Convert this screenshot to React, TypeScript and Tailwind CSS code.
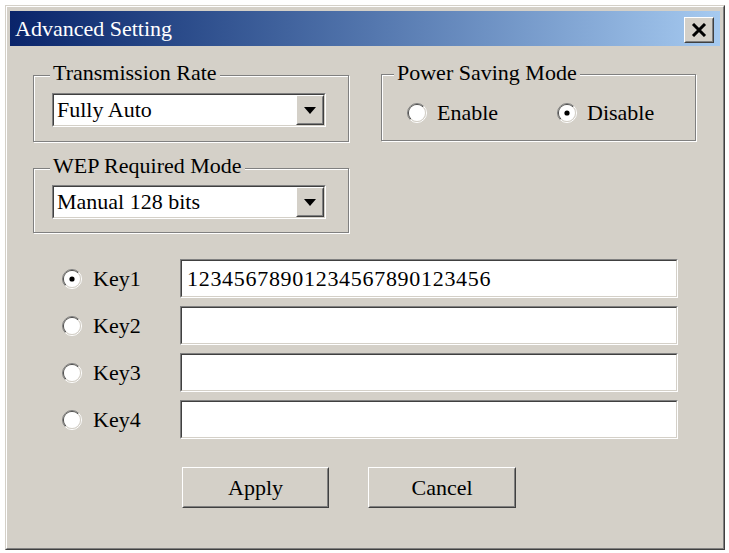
import type { ReactNode } from 'react'

// ============================================
// Classic Win2000 style "Advanced Setting" dialog
// ============================================

const FACE = 'bg-[#d4d0c8]'

function Sunken({ children, className = '' }: { children?: ReactNode; className?: string }) {
  return (
    <div className={`border border-t-[#808080] border-l-[#808080] border-b-white border-r-white ${className}`}>
      <div className="flex h-full items-center border border-t-[#404040] border-l-[#404040] border-b-[#d4d0c8] border-r-[#d4d0c8] bg-white">
        {children}
      </div>
    </div>
  )
}

function Raised({ children, className = '' }: { children?: ReactNode; className?: string }) {
  return (
    <div className={`border border-t-white border-l-white border-b-[#404040] border-r-[#404040] ${FACE} ${className}`}>
      <div className="flex h-full items-center justify-center border border-t-[#d4d0c8] border-l-[#d4d0c8] border-b-[#808080] border-r-[#808080]">
        {children}
      </div>
    </div>
  )
}

function Radio({ checked = false }: { checked?: boolean }) {
  return (
    <svg width="20" height="20" viewBox="0 0 20 20" className="shrink-0">
      <path d="M3.28 16.72 A9.5 9.5 0 0 1 16.72 3.28" fill="none" stroke="#808080" strokeWidth="1" />
      <path d="M16.72 3.28 A9.5 9.5 0 0 1 3.28 16.72" fill="none" stroke="#ffffff" strokeWidth="1" />
      <path d="M3.99 16.01 A8.5 8.5 0 0 1 16.01 3.99" fill="none" stroke="#404040" strokeWidth="1" />
      <path d="M16.01 3.99 A8.5 8.5 0 0 1 3.99 16.01" fill="none" stroke="#d4d0c8" strokeWidth="1" />
      <circle cx="10" cy="10" r="8" fill="#ffffff" />
      {checked && <circle cx="10" cy="10" r="2.6" fill="#000000" />}
    </svg>
  )
}

function Combo({ value }: { value: string }) {
  return (
    <Sunken className="h-[34px] w-full">
      <span className="flex-1 pl-[3px]">{value}</span>
      <Raised className="h-full w-[28px]">
        <svg width="12" height="7" viewBox="0 0 12 7">
          <path d="M0 0 H12 L6 7 Z" fill="#000000" />
        </svg>
      </Raised>
    </Sunken>
  )
}

interface GroupProps {
  label: string
  labelLeft: string
  labelTop: string
  className?: string
  children: ReactNode
}

function Group({ label, labelLeft, labelTop, className = '', children }: GroupProps) {
  return (
    <div
      className={`relative border border-[#808080] shadow-[inset_1px_1px_0_#ffffff,1px_1px_0_#ffffff] ${className}`}
    >
      <span className={`absolute ${labelLeft} ${labelTop} ${FACE} px-[3px] leading-[24px]`}>{label}</span>
      {children}
    </div>
  )
}

const KEYS = [
  { label: 'Key1', value: '12345678901234567890123456', checked: true },
  { label: 'Key2', value: '', checked: false },
  { label: 'Key3', value: '', checked: false },
  { label: 'Key4', value: '', checked: false },
]

export default function App() {
  return (
    <div className="min-h-screen bg-white p-[5px] font-['Liberation_Serif',serif] text-[22px] leading-[24px] text-black">
      {/* Window frame */}
      <div className="h-[545px] w-[720px] border border-t-[#d4d0c8] border-l-[#d4d0c8] border-b-[#404040] border-r-[#404040]">
        <div className={`flex h-full flex-col border border-t-white border-l-white border-b-[#808080] border-r-[#808080] ${FACE}`}>
          {/* Title bar */}
          <div className="px-[3px] pt-[4px]">
            <div className="flex h-[35px] items-center bg-gradient-to-r from-[#0a246a] to-[#a6caf0] pl-[5px] pr-[6px]">
              <span className="flex-1 pt-[1px] text-white">Advanced Setting</span>
              <Raised className="mt-[3px] h-[26px] w-[30px]">
                <svg width="16" height="14" viewBox="0 0 16 14">
                  <path d="M2 1 L14 13 M14 1 L2 13" stroke="#000000" strokeWidth="3" />
                </svg>
              </Raised>
            </div>
          </div>

          {/* Body */}
          <div className="pl-[26px]">
            <div className="flex items-start">
              <div className="mt-[29px] w-[316px]">
                <Group label="Transmission Rate" labelLeft="left-[16px]" labelTop="-top-[15px]" className="pb-[14px] pl-[18px] pr-[22px] pt-[17px]">
                  <Combo value="Fully Auto" />
                </Group>
                <Group label="WEP Required Mode" labelLeft="left-[16px]" labelTop="-top-[15px]" className="mt-[26px] pb-[13px] pl-[18px] pr-[22px] pt-[16px]">
                  <Combo value="Manual 128 bits" />
                </Group>
              </div>

              <Group label="Power Saving Mode" labelLeft="left-[12px]" labelTop="-top-[14px]" className="ml-[32px] mt-[28px] h-[67px] w-[315px] pl-[25px] pt-[26px]">
                <div className="flex h-[24px] items-center">
                  <div className="flex w-[150px] items-center">
                    <Radio />
                    <span className="ml-[10px]">Enable</span>
                  </div>
                  <div className="flex items-center">
                    <Radio checked />
                    <span className="ml-[10px]">Disable</span>
                  </div>
                </div>
              </Group>
            </div>

            {/* WEP keys */}
            <div className="ml-[29px] mt-[26px] flex flex-col gap-[8px]">
              {KEYS.map((k) => (
                <div key={k.label} className="flex h-[39px] items-center">
                  <div className="flex w-[118px] items-center">
                    <Radio checked={k.checked} />
                    <span className="ml-[11px]">{k.label}</span>
                  </div>
                  <Sunken className="h-[39px] w-[498px]">
                    <span className="pl-[5px] tracking-[0.7px]">{k.value}</span>
                  </Sunken>
                </div>
              ))}
            </div>

            {/* Actions */}
            <div className="ml-[149px] mt-[28px] flex">
              <Raised className="h-[41px] w-[147px]">Apply</Raised>
              <Raised className="ml-[39px] h-[41px] w-[148px]">Cancel</Raised>
            </div>
          </div>
        </div>
      </div>
    </div>
  )
}
